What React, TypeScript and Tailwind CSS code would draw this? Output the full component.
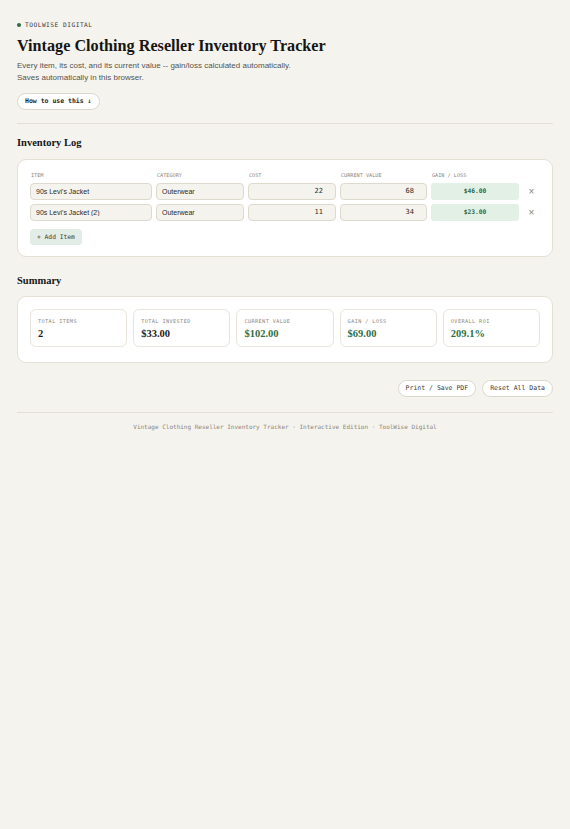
import React, { useState } from "react";

type Item = { id: number; name: string; category: string; cost: string; value: string };

const mono = "font-['DejaVu_Sans_Mono','Liberation_Mono',monospace]";
const serif = "font-['Liberation_Serif','DejaVu_Serif',serif]";
const sans = "font-['Liberation_Sans','Arial',sans-serif]";

const money = (n: number) => `$${n.toFixed(2)}`;

const StatCard = ({ label, value, green }: { label: string; value: string; green?: boolean }) => (
  <div className="h-[38px] rounded-[6px] border border-[#e9e5dc] bg-white px-[7px] pt-[7px]">
    <div className={`${mono} text-[5.2px] tracking-[0.08em] text-[#8a867d] uppercase leading-[8px]`}>{label}</div>
    <div className={`${serif} mt-[2px] text-[10.5px] font-bold leading-[14px] ${green ? "text-[#2f7046]" : "text-[#1c1c1a]"}`}>
      {value}
    </div>
  </div>
);

export default function App() {
  const [items, setItems] = useState<Item[]>([
    { id: 1, name: "90s Levi's Jacket", category: "Outerwear", cost: "22", value: "68" },
    { id: 2, name: "90s Levi's Jacket (2)", category: "Outerwear", cost: "11", value: "34" },
  ]);

  const update = (id: number, key: keyof Item, v: string) =>
    setItems((prev) => prev.map((it) => (it.id === id ? { ...it, [key]: v } : it)));

  const invested = items.reduce((s, i) => s + (parseFloat(i.cost) || 0), 0);
  const current = items.reduce((s, i) => s + (parseFloat(i.value) || 0), 0);
  const gain = current - invested;
  const roi = invested ? (gain / invested) * 100 : 0;

  const inputCls = `h-[17px] w-full rounded-[4px] border border-[#dfdace] bg-[#f5f3ee] px-[5px] text-[7px] text-[#2b2b28] outline-none`;

  return (
    <div className={`min-h-[829px] bg-[#f5f3ee] px-[17px] pt-[21px] pb-[20px] ${sans}`}>
      <div className="flex h-[8px] items-center gap-[4px]">
        <span className="h-[4px] w-[4px] rounded-full bg-[#2f6b45]" />
        <span className={`${mono} text-[6.2px] tracking-[0.08em] text-[#3a3a36]`}>TOOLWISE DIGITAL</span>
      </div>
      <h1 className={`${serif} mt-[7px] text-[16.2px] font-bold leading-[20px] text-[#161614]`}>
        Vintage Clothing Reseller Inventory Tracker
      </h1>
      <p className="mt-[4px] text-[8px] leading-[12px] text-[#55534d]">
        Every item, its cost, and its current value -- gain/loss calculated automatically.
        <br />
        Saves automatically in this browser.
      </p>
      <button
        type="button"
        className={`${mono} mt-[9px] h-[17px] rounded-full border border-[#dcd7cb] bg-white px-[7px] text-[6.5px] font-bold text-[#1f1f1d]`}
      >
        How to use this ↓
      </button>
      <div className="mt-[13px] h-px bg-[#e3dfd6]" />

      <h2 className={`${serif} mt-[12px] text-[10.5px] font-bold leading-[14px] text-[#161614]`}>Inventory Log</h2>
      <div className="mt-[9px] rounded-[9px] border-[1.5px] border-[#e4e0d4] bg-white px-[12px] pt-[10.5px] pb-[10.5px]">
        <div className="grid grid-cols-[122px_88px_88px_87px_88px_1fr] gap-x-[4px] gap-y-[4px]">
          {["Item", "Category", "Cost", "Current Value", "Gain / Loss", ""].map((h, i) => (
            <div key={i} className={`${mono} pl-[1px] text-[5.2px] uppercase leading-[8px] text-[#8a867d]`}>
              {h}
            </div>
          ))}
          {items.map((it) => {
            const g = (parseFloat(it.value) || 0) - (parseFloat(it.cost) || 0);
            return (
              <React.Fragment key={it.id}>
                <input className={inputCls} value={it.name} onChange={(e) => update(it.id, "name", e.target.value)} />
                <input className={inputCls} value={it.category} onChange={(e) => update(it.id, "category", e.target.value)} />
                <input
                  className={`${inputCls} ${mono} text-right pr-[12px] text-[7.5px]`}
                  value={it.cost}
                  onChange={(e) => update(it.id, "cost", e.target.value)}
                />
                <input
                  className={`${inputCls} ${mono} text-right pr-[12px] text-[7.5px]`}
                  value={it.value}
                  onChange={(e) => update(it.id, "value", e.target.value)}
                />
                <div
                  className={`${mono} flex h-[17px] items-center justify-center rounded-[3px] bg-[#e2f0e6] text-[6.3px] font-bold ${
                    g >= 0 ? "text-[#2f6b45]" : "text-[#a33a2e]"
                  }`}
                >
                  {money(g)}
                </div>
                <button
                  type="button"
                  onClick={() => setItems((p) => p.filter((x) => x.id !== it.id))}
                  className="flex h-[17px] items-center justify-center text-[10px] text-[#8a867d]"
                >
                  ×
                </button>
              </React.Fragment>
            );
          })}
        </div>
        <button
          type="button"
          onClick={() =>
            setItems((p) => [...p, { id: Date.now(), name: "", category: "", cost: "", value: "" }])
          }
          className={`${mono} mt-[8px] h-[16px] rounded-[4px] bg-[#e3ede8] px-[7px] text-[6.3px] text-[#2e3e36]`}
        >
          + Add Item
        </button>
      </div>

      <h2 className={`${serif} mt-[17px] text-[10.5px] font-bold leading-[14px] text-[#161614]`}>Summary</h2>
      <div className="mt-[8px] rounded-[9px] border-[1.5px] border-[#e4e0d4] bg-white px-[12px] pt-[11.5px] pb-[15.5px]">
        <div className="grid grid-cols-5 gap-[6px]">
          <StatCard label="Total Items" value={String(items.length)} />
          <StatCard label="Total Invested" value={money(invested)} />
          <StatCard label="Current Value" value={money(current)} green />
          <StatCard label="Gain / Loss" value={money(gain)} green />
          <StatCard label="Overall ROI" value={`${roi.toFixed(1)}%`} green />
        </div>
      </div>

      <div className="mt-[17px] flex justify-end gap-[6px]">
        <button
          type="button"
          className={`${mono} h-[17px] rounded-full border border-[#dcd7cb] bg-white px-[7px] text-[6.5px] text-[#3a3a36]`}
        >
          Print / Save PDF
        </button>
        <button
          type="button"
          onClick={() => setItems([])}
          className={`${mono} h-[17px] rounded-full border border-[#dcd7cb] bg-white px-[7px] text-[6.5px] text-[#3a3a36]`}
        >
          Reset All Data
        </button>
      </div>
      <div className="mt-[15px] h-px bg-[#e3dfd6]" />
      <p className={`${mono} mt-[10px] text-center text-[6px] leading-[8px] text-[#8a867d]`}>
        Vintage Clothing Reseller Inventory Tracker · Interactive Edition · ToolWise Digital
      </p>
    </div>
  );
}
